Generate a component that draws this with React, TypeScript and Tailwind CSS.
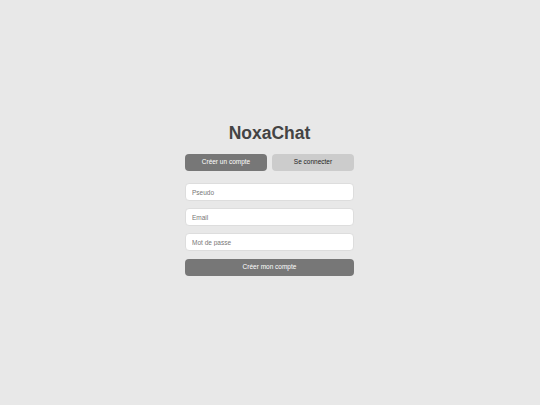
export default function App() {
  return (
    <div
      className="min-h-screen w-full bg-[#e8e8e8] flex items-center justify-center"
      style={{ fontFamily: '"Liberation Sans", Arial, sans-serif' }}
    >
      <div className="w-[169px] flex flex-col -mt-[7px] -ml-[1px]">
        {/* Title */}
        <h1 className="text-center text-[17.5px] leading-[22px] font-bold text-[#444444]">NoxaChat</h1>

        {/* Tabs */}
        <div className="mt-[10px] flex gap-[5px]">
          <button className="flex-1 h-[17px] rounded-[4px] bg-[#777777] text-white text-[6.5px] leading-none">
            Créer un compte
          </button>
          <button className="flex-1 h-[17px] rounded-[4px] bg-[#cccccc] text-[#222222] text-[6.5px] leading-none">
            Se connecter
          </button>
        </div>

        {/* Form */}
        <form className="mt-[12px] flex flex-col gap-[7px]">
          <input
            placeholder="Pseudo"
            className="h-[18px] rounded-[4px] bg-white border border-[#dddddd] px-[6px] text-[6.5px] placeholder:text-[#777777] outline-none"
          />
          <input
            placeholder="Email"
            className="h-[18px] rounded-[4px] bg-white border border-[#dddddd] px-[6px] text-[6.5px] placeholder:text-[#777777] outline-none"
          />
          <input
            placeholder="Mot de passe"
            className="h-[18px] rounded-[4px] bg-white border border-[#dddddd] px-[6px] text-[6.5px] placeholder:text-[#777777] outline-none"
          />
          <button
            type="button"
            className="mt-[1px] h-[17px] rounded-[4px] bg-[#777777] text-white text-[6.5px] leading-none"
          >
            Créer mon compte
          </button>
        </form>
      </div>
    </div>
  );
}
